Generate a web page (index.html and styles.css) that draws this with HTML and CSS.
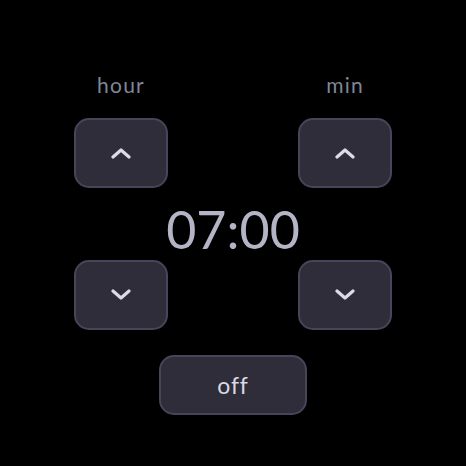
FILE: index.html
```html
<html lang="en"><head>
    <meta charset="UTF-8">
    <meta name="viewport" content="width=device-width, initial-scale=1.0">
    <title>Alarm</title>
    <link rel="stylesheet" href="styles.css">
</head>
<body>
    <div class="alarm">
        <div class="picker">
            <span class="label">hour</span>
            <span></span>
            <span class="label">min</span>

            <!-- step up -->
            <button class="step">
                <svg width="22" height="12" viewBox="0 0 22 12"><polyline points="3,10 11,3 19,10"/></svg>
            </button>
            <span></span>
            <button class="step">
                <svg width="22" height="12" viewBox="0 0 22 12"><polyline points="3,10 11,3 19,10"/></svg>
            </button>

            <div class="time">07:00</div>

            <!-- step down -->
            <button class="step">
                <svg width="22" height="12" viewBox="0 0 22 12"><polyline points="3,2 11,9 19,2"/></svg>
            </button>
            <span></span>
            <button class="step">
                <svg width="22" height="12" viewBox="0 0 22 12"><polyline points="3,2 11,9 19,2"/></svg>
            </button>
        </div>
        <button class="toggle">off</button>
    </div>
</body></html>
```

FILE: styles.css
```css
body {
    margin: 0;
    padding: 0;
    background-color: #000;
    font-family: Lato, "Open Sans", sans-serif;
}
.alarm {
    display: flex;
    flex-direction: column;
    align-items: center;
    padding-top: 70px;
}
.picker {
    display: grid;
    grid-template-columns: 94px 130px 94px;
    grid-template-rows: 48px 70px 72px 70px;
}
.label {
    text-align: center;
    font-size: 21px;
    line-height: 30px;
    color: #7f8796;
    letter-spacing: 1.2px;
}
button {
    font-family: inherit;
    background-color: #2e2d39;
    border: 2px solid #46455a;
    cursor: pointer;
    padding: 0;
}
.step {
    width: 94px;
    height: 70px;
    border-radius: 15px;
    display: flex;
    align-items: center;
    justify-content: center;
}
.step svg polyline {
    fill: none;
    stroke: #dcdce8;
    stroke-width: 3.2;
    stroke-linecap: round;
    stroke-linejoin: round;
}
.time {
    grid-column: 1 / 4;
    text-align: center;
    font-size: 52px;
    line-height: 72px;
    padding-top: 5px;
    color: #b3b5c6;
}
.toggle {
    margin-top: 25px;
    width: 148px;
    height: 60px;
    border-radius: 15px;
    font-size: 23px;
    letter-spacing: 0.8px;
    color: #d9d9e4;
}
```
